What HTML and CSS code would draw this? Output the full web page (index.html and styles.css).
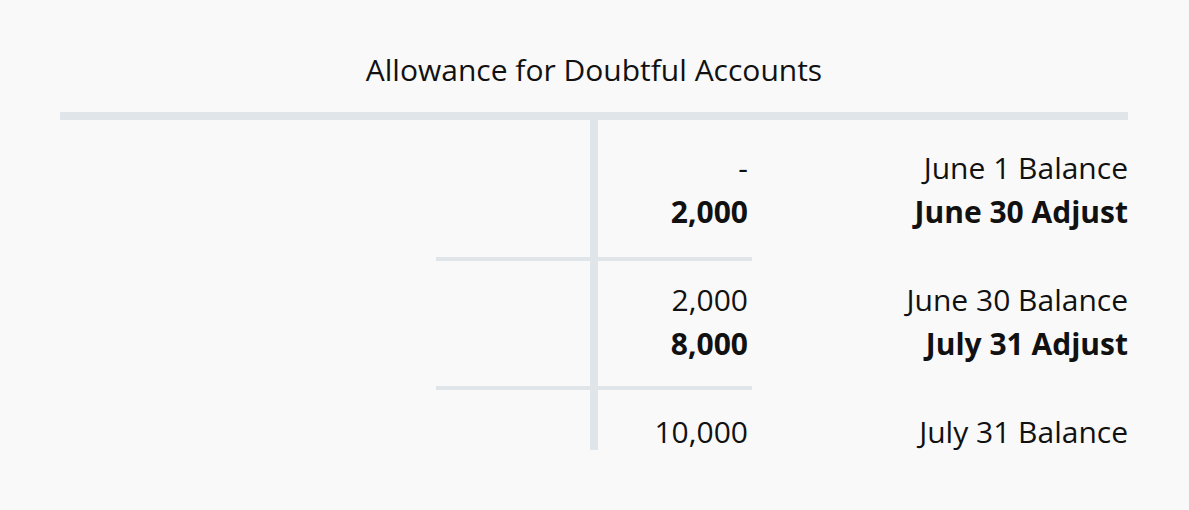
FILE: index.html
```html
<!DOCTYPE html>
<html lang="en">
<head>
<meta charset="utf-8">
<title>Allowance for Doubtful Accounts</title>
<link rel="stylesheet" href="styles.css">
</head>
<body>
<main class="page">
  <h1 class="title">Allowance for Doubtful Accounts</h1>
  <section class="taccount">
    <div class="rule-top"></div>
    <div class="divider"></div>

    <div class="amt r1">-</div>
    <div class="lbl r1">June 1 Balance</div>
    <div class="amt r2 bold">2,000</div>
    <div class="lbl r2 bold">June 30 Adjust</div>

    <div class="rule-short s1"></div>

    <div class="amt r3">2,000</div>
    <div class="lbl r3">June 30 Balance</div>
    <div class="amt r4 bold">8,000</div>
    <div class="lbl r4 bold">July 31 Adjust</div>

    <div class="rule-short s2"></div>

    <div class="amt r5">10,000</div>
    <div class="lbl r5">July 31 Balance</div>
  </section>
</main>
</body>
</html>
```

FILE: styles.css
```css
html, body {
  margin: 0;
  padding: 0;
  background: #f9f9f9;
}

body {
  font-family: "Open Sans", "Noto Sans", sans-serif;
  color: #111111;
  width: 1189px;
  height: 510px;
  overflow: hidden;
}

.page {
  padding: 52px 61px 0 60px;
}

.title {
  margin: 0 0 24px;
  font-size: 30px;
  font-weight: 400;
  line-height: 36px;
  text-align: center;
}

.taccount {
  display: grid;
  grid-template-columns: 1fr 154px 8px 154px 1fr;
  grid-template-rows: 8px 26px 44px 44px 23px 4px 17px 44px 44px 20px 4px 20px 40px;
  font-size: 30px;
  line-height: 44px;
}

.rule-top {
  grid-column: 1 / -1;
  grid-row: 1;
  background: #dfe5e8;
}

.divider {
  grid-column: 3;
  grid-row: 2 / -1;
  background: #dfe5e8;
}

.rule-short {
  grid-column: 2 / 5;
  background: #dfe5e8;
}
.s1 { grid-row: 6; }
.s2 { grid-row: 11; }

.amt {
  grid-column: 4;
  text-align: right;
  padding-right: 4px;
  white-space: nowrap;
}

.lbl {
  grid-column: 5;
  text-align: right;
  white-space: nowrap;
}

.r1 { grid-row: 3; }
.r2 { grid-row: 4; }
.r3 { grid-row: 8; }
.r4 { grid-row: 9; }
.r5 { grid-row: 13; }

.bold { font-weight: 700; }
```
